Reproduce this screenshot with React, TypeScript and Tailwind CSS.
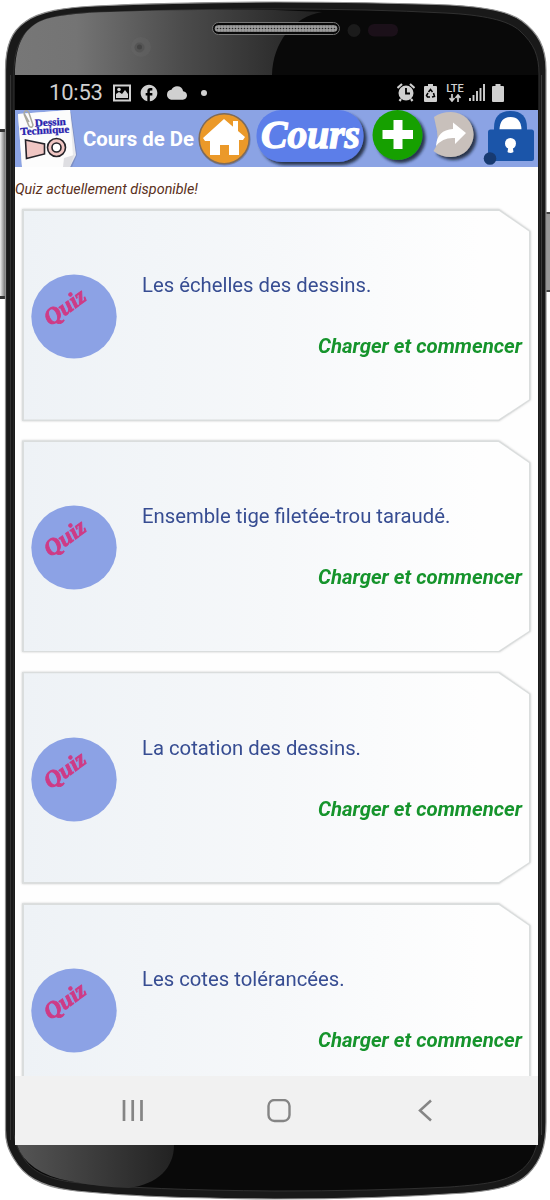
import React from "react";
import { MdCloud, MdFacebook } from "react-icons/md";

const quizzes = [
  "Les échelles des dessins.",
  "Ensemble tige filetée-trou taraudé.",
  "La cotation des dessins.",
  "Les cotes tolérancées.",
];

function PhoneBody() {
  const outer =
    "M5.500 1130V70C5.500 45 12 31 25 22C40 11 65 7.500 95 6Q180 2 275 2Q370 2 450 5C485 7 508 11 522 21C538 33 546 47 546 70V1122C546 1146 541 1161 528 1174C517 1185 500 1190 465 1193Q375 1199 275 1199Q130 1198 69 1190C40 1186 24 1176 14 1159C8 1149 5.500 1142 5.500 1130Z";
  return (
    <svg className="absolute inset-0" width="550" height="1200" viewBox="0 0 550 1200" aria-hidden="true">
      <defs>
        <linearGradient id="topShine">
          <stop offset="0" stopColor="#777" />
          <stop offset=".2" stopColor="#747474" />
          <stop offset=".55" stopColor="#4b4b4b" />
          <stop offset="1" stopColor="#202020" />
        </linearGradient>
        <linearGradient id="bottomShine">
          <stop offset="0" stopColor="#555" />
          <stop offset="1" stopColor="#222" />
        </linearGradient>
        <linearGradient id="sideKey">
          <stop offset="0" stopColor="#eee" />
          <stop offset="1" stopColor="#777" />
        </linearGradient>
        <pattern id="grille" width="3" height="3" patternUnits="userSpaceOnUse">
          <rect width="3" height="3" fill="#9c9c9c" />
          <circle cx="1.500" cy="1.500" r=".8" fill="#272727" />
        </pattern>
      </defs>
      <path d="M0 130h5v169H0z" fill="url(#sideKey)" />
      <path d="M0 129h5v3H0zM0 296h5v3H0z" fill="#333" />
      <path d="M546 213h4v79h-4z" fill="#999" />
      <path d="M546 212h4v2h-4zM546 290h4v2h-4z" fill="#444" />
      <path d={outer} fill="#191919" stroke="#909090" strokeWidth="1.200" />
      <path
        d="M14 1130V72C14 44 25 26 46 19Q68 12 110 12Q190 9 275 9Q370 9 445 13C483 15 508 20 520 31C534 44 539 55 539 75V1125C539 1147 532 1164 517 1173C503 1183 475 1185 450 1187Q370 1191 275 1191Q145 1190 80 1183C47 1180 31 1171 23 1157C17 1148 14 1142 14 1130Z"
        fill="#090909"
        stroke="#393939"
        strokeWidth=".8"
      />
      <path d="M15 75C15 43 25 26 46 19Q68 13 110 12Q190 9 275 10L322 12C293 17 273 42 272 75Z" fill="url(#topShine)" />
      <path d="M17 1145H174C174 1168 158 1184 129 1188Q99 1187 69 1181Q27 1173 17 1145Z" fill="url(#bottomShine)" />
      <circle cx="141" cy="47" r="10" fill="#777" opacity=".18" />
      <circle cx="139.500" cy="47.500" r="5" fill="#555" />
      <circle cx="139.500" cy="47" r="2.500" fill="#444" />
      <rect x="212.500" y="22.500" width="127" height="12" rx="6" fill="#090909" stroke="#777" />
      <rect x="215" y="25.500" width="122" height="6" rx="3" fill="url(#grille)" stroke="#a2a2a2" strokeWidth=".7" />
      <circle cx="354" cy="30.500" r="6.500" fill="#1b1b1b" />
      <rect x="368" y="24" width="30" height="12.500" rx="6" fill="#1b1019" />
      <path d="M10.500 75V1140" stroke="#343434" />
      <path d="M541.500 75V1135" stroke="#3b3b3b" />
    </svg>
  );
}

function StatusBar() {
  return (
    <div className="flex h-[35px] items-center bg-black text-[#d0d0d0]">
      <span className="ml-[34px] w-[64px] text-[22px] leading-[35px] tracking-[-0.2px]">10:53</span>
      <svg width="18" height="18" viewBox="0 0 18 18">
        <path fill="none" stroke="currentColor" strokeWidth="2" d="M1 1.500h16v15H1z" />
        <circle cx="6" cy="5.500" r="1.800" fill="currentColor" />
        <path d="M3 14V10l3-2 3 2 3-4 3 4v4Z" fill="currentColor" />
      </svg>
      <MdFacebook className="ml-[8px]" size={20} />
      <MdCloud className="ml-[8px]" size={20} />
      <span className="ml-[14px] size-[6px] rounded-full bg-[#d0d0d0]" />
      <svg className="ml-[190px]" width="18" height="19" viewBox="0 0 18 19">
        <circle cx="9" cy="10" r="7.500" fill="currentColor" />
        <path d="M.5 5 5 1M17.500 5 13 1M4 16l-1.500 2M14 16l1.500 2" stroke="currentColor" strokeWidth="2.200" />
        <path d="M9 5v5.500h4" fill="none" stroke="black" strokeWidth="1.800" />
      </svg>
      <svg className="ml-[9px]" width="13" height="18" viewBox="0 0 13 18">
        <path d="M4 0h5v2h3q1 0 1 1v14q0 1-1 1H1q-1 0-1-1V3q0-1 1-1h3z" fill="currentColor" />
        <path d="m4.500 8 2-2.500 2 2.500M9.500 9l1 3.500-2.500.5M6 13H3.500l-1-1.500 1.500-2.500" fill="none" stroke="black" strokeWidth="1.500" />
      </svg>
      <div className="ml-[9px] flex w-[18px] flex-col items-center">
        <span className="text-[11px] font-medium leading-[10px]">LTE</span>
        <svg width="12" height="8" viewBox="0 0 12 8">
          <path d="M3 0v7M.500 4 3 7l2.500-3M9 8V1M6.500 4 9 1l2.500 3" fill="none" stroke="currentColor" strokeWidth="1.700" />
        </svg>
      </div>
      <svg className="ml-[5px]" width="16" height="17" viewBox="0 0 16 17">
        <path d="M1 17v-3M4.500 17v-6M8 17V7M11.500 17V4M15 17V0" stroke="currentColor" strokeWidth="1.900" />
      </svg>
      <svg className="ml-[7px]" width="12" height="18" viewBox="0 0 12 18">
        <path d="M3.500 0h5v2H11q1 0 1 1v14q0 1-1 1H1q-1 0-1-1V3q0-1 1-1h2.500z" fill="currentColor" />
      </svg>
    </div>
  );
}

function Logo() {
  return (
    <svg className="shrink-0" width="63" height="57" viewBox="0 0 63 57">
      <path d="m5 5 51-3 6 43-5 12H7Z" fill="#707ba6" opacity=".5" />
      <path d="m3 4 52-4 6 45-6 12H7Z" fill="#e9e9ec" />
      <path d="m3 4 52-4 3 46-8 3-1 8H7Z" fill="#fcfcfc" />
      <path d="m48 57 1-9 10-3-4 12Z" fill="#dedee2" />
      <path d="m9 4 5 12q3 3 4-1L14 3q-3-5-5 0l5 9" fill="none" stroke="#aaa89e" strokeWidth="1.500" />
      <g fill="#2620ae" stroke="#2620ae" strokeWidth=".3" fontFamily="Liberation Serif, serif" fontWeight="bold" fontSize="10.500">
        <text x="20" y="16.500" textLength="31" lengthAdjust="spacingAndGlyphs" transform="rotate(-3 20 16.500)">Dessin</text>
        <text x="5.500" y="25" textLength="49" lengthAdjust="spacingAndGlyphs" transform="rotate(-3 5.500 25)">Technique</text>
      </g>
      <path d="m10.500 30 19 4v10l-18 4.500Z" fill="#f0c6c3" stroke="#252329" strokeWidth="1.600" />
      <circle cx="41.500" cy="37.500" r="9" fill="#f0c6c3" stroke="#252329" strokeWidth="1.600" />
      <circle cx="41.500" cy="37.500" r="4.500" fill="white" stroke="#252329" strokeWidth="1.600" />
    </svg>
  );
}

function AppBar() {
  return (
    <header className="flex h-[57px] overflow-hidden bg-[#8ba3e4]">
      <Logo />
      <h1 className="ml-[5px] w-[114px] shrink-0 whitespace-nowrap text-[20.4px] font-bold leading-[59px] text-white">Cours de De</h1>
      <svg className="shrink-0" width="56" height="57" viewBox="182 0 56 57">
        <circle cx="209.700" cy="29.500" r="26" fill="#38476a" opacity=".35" />
        <circle cx="209.200" cy="28.700" r="25" fill="#eb9929" stroke="#806b58" strokeWidth="1.500" />
        <path d="M188 28 209 9l21 18-2 3h-4v15h-10V35h-9v10h-10V31h-5Z" fill="white" />
        <path d="M218 11h5v10h-5z" fill="white" />
      </svg>
      <svg className="shrink-0" width="118" height="57" viewBox="238 0 118 57">
        <defs>
          <filter id="badgeShadow" x="-20%" y="-20%" width="150%" height="160%">
            <feDropShadow dx="3" dy="3" stdDeviation="1.600" floodColor="#111827" floodOpacity=".8" />
          </filter>
        </defs>
        <rect x="241.500" y="0" width="107" height="52" rx="25" fill="#5c7ee9" filter="url(#badgeShadow)" />
        <text x="246" y="37.500" fill="white" stroke="white" strokeWidth="1.300" textLength="99" lengthAdjust="spacingAndGlyphs" fontFamily="Liberation Serif, serif" fontWeight="bold" fontStyle="italic" fontSize="39">Cours</text>
      </svg>
      <svg className="shrink-0" width="58" height="57" viewBox="356 0 58 57">
        <circle cx="382.500" cy="25" r="25" fill="#16a005" filter="url(#badgeShadow)" />
        <path d="M378.500 10h9v10H398v9h-10.500V39h-9V29H367.500v-9h11Z" fill="white" />
      </svg>
      <svg className="shrink-0" width="54" height="57" viewBox="414 0 54 57">
        <path d="M419 7Q426 2 436 2A22.500 22.500 0 0 1 436 47Q426 47 418.500 41Q424 34 422 21Z" fill="#c8c0bb" filter="url(#badgeShadow)" />
        <path d="M421 36Q422 20 438 19V12.500L451 23 440 34v-6Q428 27 421 36Z" fill="white" />
      </svg>
      <svg className="shrink-0" width="55" height="57" viewBox="468 0 55 57">
        <path d="M479 22V18Q479 1 495.500 1T512 18v4Z" fill="#1b55a9" />
        <path d="M484.500 19.500Q485 7 495.500 7t11 12.500Z" fill="white" />
        <rect x="473" y="19.500" width="46" height="31.500" rx="2.500" fill="#1b55a9" />
        <circle cx="495.500" cy="33.500" r="5.500" fill="white" />
        <path d="M493.500 36h4l1 6q-3 2-6 0Z" fill="white" />
        <circle cx="475" cy="48.500" r="6.300" fill="#173a71" />
      </svg>
    </header>
  );
}

function QuizCard({ title }: { title: string }) {
  return (
    <article className="ml-[7px] h-[212px] w-[508.5px] shrink-0 drop-shadow-[0_0_1px_rgba(0,0,0,0.2)]">
      <div className="h-full bg-[#dadddd] p-[1.5px] [clip-path:polygon(0_0,477px_0,100%_22px,100%_191px,477px_100%,0_100%)]">
        <div className="flex h-full bg-linear-to-r from-[#eef2f6] via-[#f6f8fa] to-[#fefefe] to-90% [clip-path:polygon(0_0,475px_0,100%_21px,100%_189px,475px_100%,0_100%)]">
          <svg className="ml-[7px] mt-[63.5px] shrink-0" width="86" height="86" viewBox="0 0 86 86">
            <ellipse cx="43" cy="42.500" rx="42.700" ry="42" fill="#8ca2e5" />
            <text x="19.500" y="52.500" transform="rotate(-36 19.500 52.500)" fill="#ce3b86" stroke="#ce3b86" strokeWidth=".9" fontFamily="Liberation Serif, serif" fontSize="23" fontWeight="bold" fontStyle="italic" textLength="46" lengthAdjust="spacingAndGlyphs">Quiz</text>
          </svg>
          <div className="flex flex-1 flex-col pl-[25.5px] pr-[7px] pt-[59.3px]">
            <h2 className="whitespace-nowrap text-[20.3px] leading-[30px] text-[#374d92]">{title}</h2>
            <button className="mt-[31px] self-end whitespace-nowrap text-[20.4px] font-bold italic leading-[30px] text-[#16942c]">Charger et commencer</button>
          </div>
        </div>
      </div>
    </article>
  );
}

function NavigationBar() {
  return (
    <nav className="flex h-[69px] shrink-0 items-center bg-[#f1f1f1] text-[#858585]">
      <svg className="ml-[106px]" width="24" height="24" viewBox="0 0 24 24">
        <path d="M3 1v21M11.700 1v21M20.500 1v21" stroke="currentColor" strokeWidth="2.700" />
      </svg>
      <svg className="ml-[122px]" width="24" height="24" viewBox="0 0 24 24">
        <rect x="1.500" y="1" width="21" height="21" rx="6" fill="none" stroke="currentColor" strokeWidth="2.400" />
      </svg>
      <svg className="ml-[125px]" width="20" height="24" viewBox="0 0 20 24">
        <path d="M15 1.500 4 11.500l11 10" fill="none" stroke="currentColor" strokeWidth="2.500" />
      </svg>
    </nav>
  );
}

export default function App() {
  return (
    <div className="relative h-[1200px] w-[550px] overflow-hidden bg-white pl-[15px] pt-[75px] font-['Roboto',sans-serif]">
      <PhoneBody />
      <main className="relative flex h-[1070px] w-[523px] flex-col overflow-hidden bg-[#fefefe]">
        <StatusBar />
        <AppBar />
        <section className="min-h-0 flex-1 overflow-hidden">
          <p className="h-[42px] text-[14.4px] italic leading-[45px] text-[#5a3020]">Quiz actuellement disponible!</p>
          <div className="flex flex-col gap-[19.4px]">
            {quizzes.map((title) => (
              <QuizCard key={title} title={title} />
            ))}
          </div>
        </section>
        <NavigationBar />
      </main>
    </div>
  );
}
